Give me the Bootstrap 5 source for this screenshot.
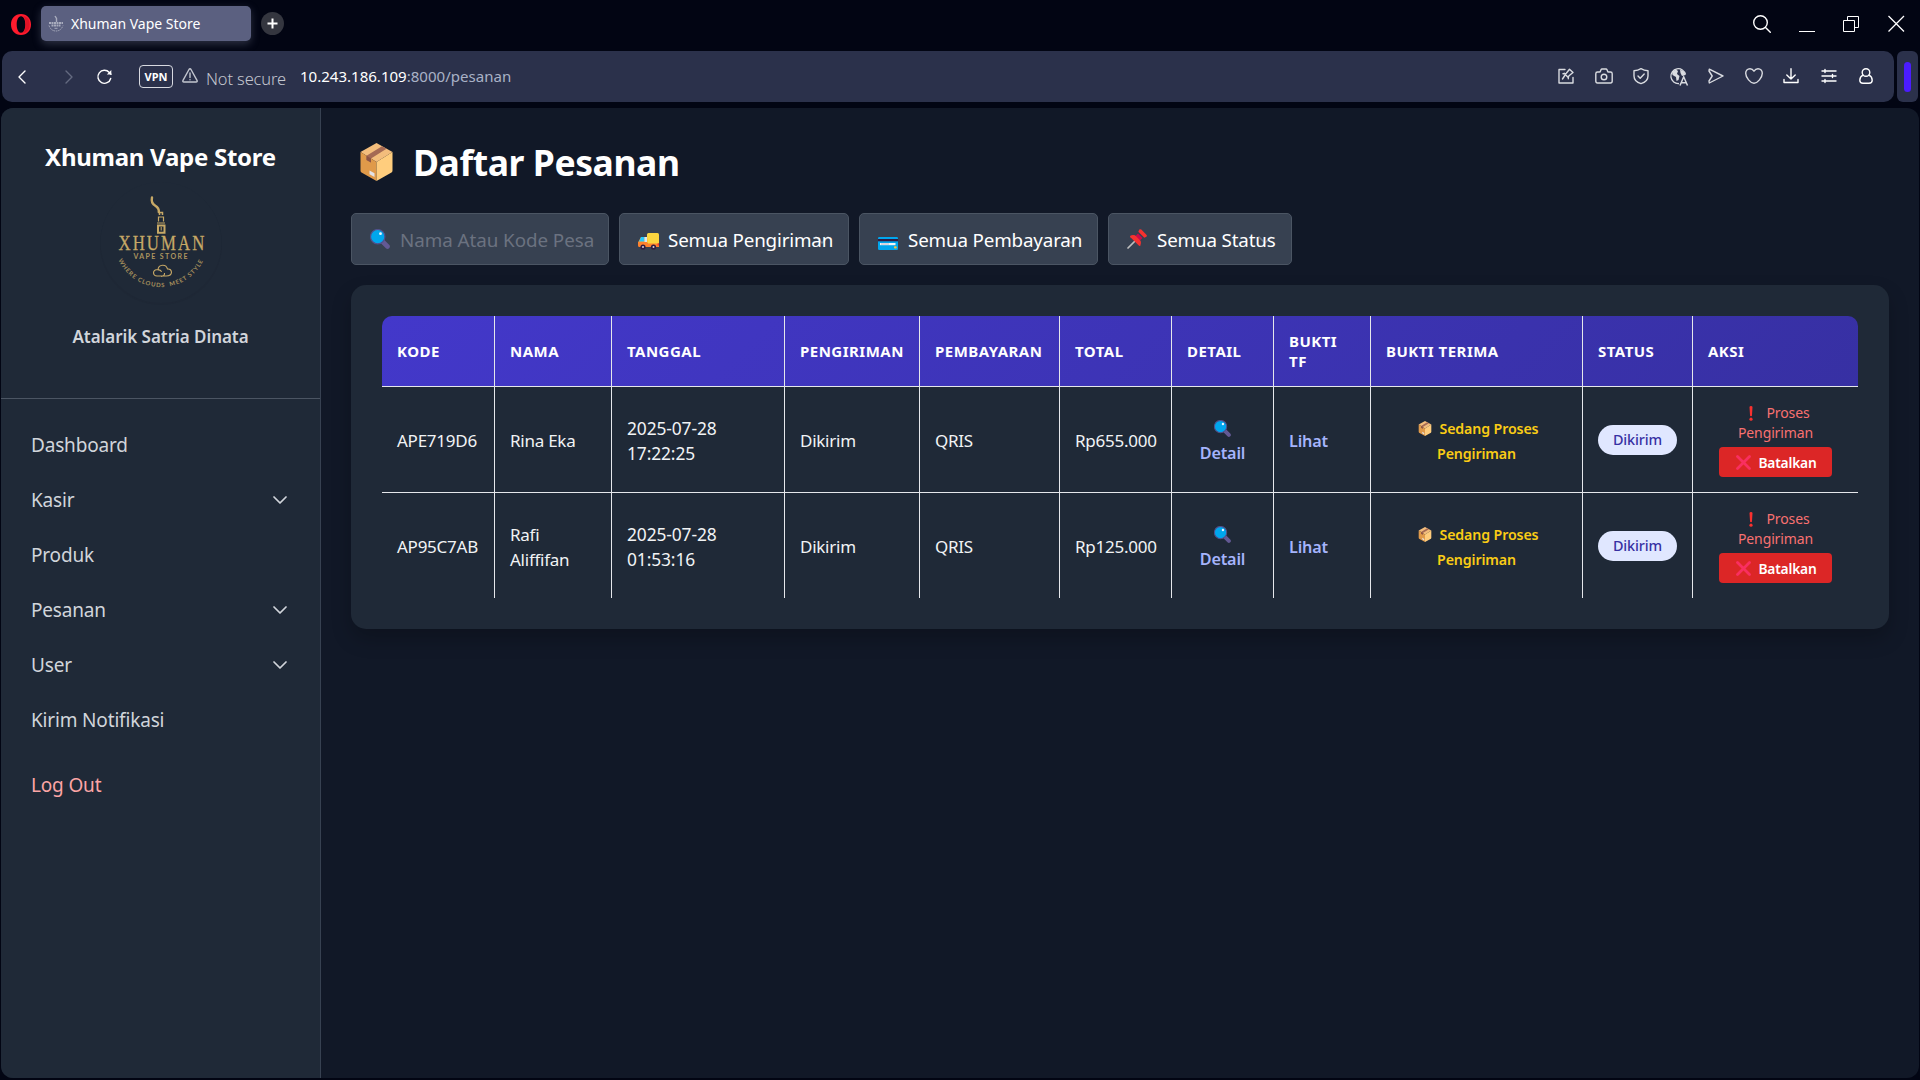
<!DOCTYPE html>
<html lang="id" data-bs-theme="dark">
<head>
<meta charset="utf-8">
<title>Xhuman Vape Store</title>
<link rel="stylesheet" href="https://cdn.jsdelivr.net/npm/bootstrap@5.3.0/dist/css/bootstrap.min.css">
<style>
  body { width: 1920px; height: 1080px; overflow: hidden; background: #020513; font-family: "Noto Sans", "Open Sans", sans-serif; color: #e5e7eb; }
  svg { flex: none; display: block; overflow: visible; }
  .ln { fill: none; stroke: currentColor; stroke-linecap: round; stroke-linejoin: round; stroke-width: 1.4; }

  /* window chrome */
  .tabstrip { height: 51px; padding: 6px 15px 0 11px; }
  .opera { margin-top: 8px; }
  .tab-active { width: 210px; height: 35px; margin-left: 10px; padding-left: 7px; background: #5b6080; border-radius: 5px; box-shadow: 0 3px 8px rgba(110,115,140,.4); color: #fff; font-size: 14px; line-height: 20px; }
  .tab-active span { margin-left: -1px; }
  .tab-plus { width: 23px; height: 23px; margin-left: 10px; margin-top: 6px; background: #34363f; }
  .window-buttons { margin-top: 9px; gap: 28px; color: #fff; }
  .toolbar { height: 51px; padding: 0 2px; }
  .addressbar { width: 1892px; background: #2b314b; border-radius: 10px; }
  .back { margin-left: 16px; }
  .forward { margin-left: 39px; color: #646a80; }
  .reload { margin-left: 24px; }
  .side-grip { width: 21px; background: #2b314b; border-radius: 6px; }
  .side-grip i { width: 7px; height: 30px; border-radius: 4px; background: #4b1cff; }
  .vpn { width: 34px; height: 23px; margin-left: 27px; padding-top: 1px; border: 1.5px solid #d7d9e0; border-radius: 4px; color: #fff; font-size: 11px; font-weight: 700; }
  .warn { margin: 0 0 2px 9px; color: #c3c6cf; }
  .notsecure { margin-left: 8px; font-size: 16.4px; font-weight: 300; color: #c3c6cf; letter-spacing: -.1px; padding-top: 5px; }
  .address { margin-left: 14px; font-size: 15.05px; color: #a9b1c6; }
  .tools { margin-right: 9px; }
  .tool { width: 37.5px; color: #d9dbe0; }

  /* page */
  .page { height: 970px; margin: 6px 1px 0; background: #111827; border-radius: 12px; overflow: hidden; }
  .sidebar { width: 320px; background: #1f2937; border-right: 1px solid #374151; }
  .brand { height: 291px; border-bottom: 1px solid #4b5563; padding-top: 34px; }
  .brand-name { font-size: 24px; font-weight: 700; line-height: 30px; color: #fff; letter-spacing: -.27px; }
  .brand-logo { margin-top: 10px; }
  .brand-user { font-size: 17px; font-weight: 600; line-height: 24px; color: #d1d5db; margin-top: 21px; letter-spacing: -.05px; }
  .menu { padding: 19px 33px 0 30px; font-size: 19px; letter-spacing: -.17px; color: #d1d5db; }
  .menu-item { height: 55px; }
  .menu-item svg { margin-top: -2px; }
  .menu-item.logout { margin-top: 10px; color: #fca5a5; }

  .content { padding: 31px 30px 0 30px; }
  .page-title { font-size: 35.5px; font-weight: 700; line-height: 46px; color: #fff; letter-spacing: -.42px; padding-left: 9px; gap: 20px; }
  .filters { gap: 10px; margin-top: 28px; }
  .filter { height: 52px; background: #374151; border: 1px solid #4b5563; border-radius: 5px; font-size: 18.8px; letter-spacing: -.16px; color: #fff; padding-left: 18px; white-space: nowrap; }
  .filter .caret { position: absolute; right: 19px; top: 22px; color: #6b7280; }
  .filter span { position: relative; margin-left: 1px; padding-top: 2px; }
  .filter.search { width: 258px; color: #6b7280; }
  .filter.search span { margin-left: 2px; letter-spacing: -.05px; }
  .filter.by-shipping { width: 230px; }
  .filter.by-payment { width: 239px; }
  .filter.by-state { width: 184px; }
  .by-payment span, .by-state span { margin-left: 2px; }
  .orders { margin-top: 20px; height: 344px; background: #1f2937; border-radius: 15px; padding: 31px; box-shadow: 0 10px 20px rgba(0,0,0,.22); }
  .rounded-head { border-radius: 10px 10px 0 0; overflow: hidden; }

  .orders-table { width: 1476px; table-layout: fixed; border-collapse: separate; border-spacing: 0; }
  .c-kode { width: 113px; } .c-nama { width: 117px; } .c-tanggal { width: 173px; } .c-kirim { width: 135px; }
  .c-bayar { width: 140px; } .c-total { width: 112px; } .c-detail { width: 102px; } .c-tf { width: 97px; }
  .c-terima { width: 212px; } .c-status { width: 110px; } .c-aksi { width: 165px; }
  .orders-table thead { background: linear-gradient(135deg, #4338ca, #3730a3); }
  .orders-table thead tr { height: 71px; }
  .orders-table th { font-size: 15px; font-weight: 700; line-height: 20px; letter-spacing: .48px; color: #fff; padding: 0 5px 0 15px; vertical-align: middle; }
  .orders-table td { font-size: 17px; line-height: 25px; letter-spacing: -.25px; padding: 2px 10px 0 15px; vertical-align: middle; color: #f1f3f5; }
  .orders-table td.when { font-size: 17.4px; letter-spacing: -.12px; }
  .orders-table td.mid { padding-left: 0; padding-right: 0; }
  .orders-table td.act { padding: 1px 0 0; }
  .orders-table th, .orders-table td { border-right: 1px solid #e5e7eb; border-bottom: 1px solid #e5e7eb; }
  .orders-table th:last-child, .orders-table td:last-child { border-right: 0; }
  .orders-table tbody tr:last-child td { border-bottom: 0; }
  .orders-table tbody tr { height: 106px; }
  .orders-table tbody tr:last-child { height: 105px; }
  .lnk { color: #a5b4fc; font-weight: 600; font-size: 16.2px; letter-spacing: -.2px; }
  .lnk svg { margin: 5px 0 4px; }
  .shipping { font-size: 14.2px; font-weight: 600; color: #facc15; letter-spacing: -.12px; padding-top: 1px; }
  .shipping svg { display: inline-block; vertical-align: middle; margin: -3px 8px 0 3px; }
  .state { width: 79px; height: 30px; margin-top: -2px; border-radius: 15px; background: #e0e7ff; color: #3730a3; font-size: 14.4px; font-weight: 500; letter-spacing: -.1px; }
  .note { font-size: 14px; line-height: 20px; color: #f87171; letter-spacing: -.12px; }
  .note svg { display: inline-block; vertical-align: middle; margin: -2px 13px 0 8px; }
  .cancel { width: 113px; height: 30px; margin-top: 4px; padding: 1px 0 0 2px; background: #dc2626; border-radius: 4px; color: #fff; font-size: 13.8px; font-weight: 600; letter-spacing: -.2px; line-height: 20px; gap: 7px; }
</style>
<script src="https://cdn.jsdelivr.net/npm/bootstrap@5.3.0/dist/js/bootstrap.bundle.min.js"></script>
</head>
<body>
<svg width="0" height="0" class="position-absolute">
  <symbol id="box" viewBox="0 0 32 38">
    <path d="M16 0 32 9 16 19 0 9Z" fill="#f3bd7c"/>
    <path d="M0 9 16 19V38L1 29.500Q0 29 0 27.500Z" fill="#e09a4a"/>
    <path d="M32 9 16 19V38L31 29.500Q32 29 32 27.500Z" fill="#ffcd7d"/>
    <path d="M21.500 3.200 26 5.800 10.500 15.400V19.500L6 17V12.700Z" fill="#a56a54"/>
    <path d="M6 12.700 10.500 15.400V19.500L6 17Z" fill="#8c5445"/>
    <path d="M9 27.500 14 30.200V34L9 31.200Z" fill="#e3e3e8"/>
  </symbol>
  <symbol id="lens" viewBox="0 0 20 20">
    <path d="M12.500 12.500 17.500 17.500" stroke="#635994" stroke-width="4.600" stroke-linecap="round"/>
    <circle cx="7.700" cy="7.700" r="7.200" fill="#00a6ed" stroke="#50508c" stroke-width="1.200"/>
    <circle cx="10.500" cy="4.700" r="1.400" fill="#e8f6ff"/>
  </symbol>
  <symbol id="truck" viewBox="0 0 21 17">
    <rect x="9" y="0" width="12" height="11" rx="1.500" fill="#fcd53f"/>
    <path d="M3 4H8Q9.300 4 9.300 5.500V12H0V9.500Z" fill="#ff9b2e"/>
    <path d="M3 4H6.500V8.500H1Z" fill="#26c9fc"/><path d="M6.500 4H9V10H6.500Z" fill="#d7e6ee"/>
    <path d="M0 9.500Q0 9 .8 9H9.300V10.500H21V14H1.500Q0 14 0 12.500Z" fill="#ff822d"/>
    <circle cx="5" cy="14" r="2.600" fill="#321b41"/><circle cx="15.500" cy="14" r="2.600" fill="#321b41"/>
    <circle cx="5" cy="14" r="1" fill="#d3d3d3"/><circle cx="15.500" cy="14" r="1" fill="#d3d3d3"/>
    <rect x="19.500" y="10.500" width="1.500" height="2" fill="#f8312f"/>
  </symbol>
  <symbol id="bankcard" viewBox="0 0 20 13">
    <rect width="20" height="13" rx="1.200" fill="#00a6ed"/>
    <rect y="2" width="20" height="2.300" fill="#321b41"/>
    <rect x="2" y="6" width="15.500" height="2.200" fill="#f4f4f4"/><rect x="3" y="6.400" width="8" height="1.200" fill="#c5bfd0"/>
    <rect x="16" y="9.200" width="2.700" height="2.400" rx=".8" fill="#f9c23c"/>
  </symbol>
  <symbol id="pin" viewBox="0 0 20 20">
    <path d="M1 19 8 12" stroke="#bebebe" stroke-width="1.700" stroke-linecap="round"/>
    <path d="M11 4.500 15.500 9 11.500 13 7 8.500Z" fill="#ca0b4a"/>
    <path d="M12.300.6Q13.300-.3 14.300.6L19.400 5.700Q20.300 6.700 19.400 7.700L17.300 8.700 11.300 2.700Z" fill="#f8312f"/>
    <path d="M3.300 6.700Q5.500 5.500 8 6.300L13.700 12Q14.500 14.500 13.300 16.700 12.500 17.300 11.800 16.600L3.400 8.200Q2.700 7.400 3.300 6.700Z" fill="#f8312f"/>
  </symbol>
  <symbol id="bang" viewBox="0 0 4 15">
    <path d="M.5 1Q.6 0 2 0T3.500 1L3 9.500Q2.900 10.300 2 10.300T1 9.500Z" fill="#f8312f"/><circle cx="2" cy="13.200" r="1.600" fill="#f8312f"/>
  </symbol>
  <symbol id="cross" viewBox="0 0 15 15">
    <path d="M1.500 1.500 13.500 13.500M13.500 1.500 1.500 13.500" stroke="#f92f60" stroke-width="2.800" stroke-linecap="round"/>
  </symbol>
  <symbol id="down" viewBox="0 0 14 8"><path d="M1 1 7 7 13 1" fill="none" stroke="currentColor" stroke-width="1.700" stroke-linecap="round" stroke-linejoin="round"/></symbol>
</svg>

<header>
  <div class="tabstrip d-flex align-items-start">
    <svg class="opera" width="20" height="21" viewBox="0 0 20 21"><path fill="#ff1b2d" fill-rule="evenodd" d="M10 0C4 0 0 4.600 0 10.500S4 21 10 21 20 16.400 20 10.500 16 0 10 0ZM10 2.200C12.800 2.200 14.300 6 14.300 10.500S12.800 18.800 10 18.800 5.700 15 5.700 10.500 7.200 2.200 10 2.200Z"/><path d="M12 1.800A9 9 0 0 1 12 19.200C15.500 17 15.500 4 12 1.800Z" fill="#e01226"/></svg>
    <div class="tab-active d-flex align-items-center">
      <svg width="16" height="17" viewBox="0 0 16 17" class="me-2" fill="none" stroke="#a9acbd"><path d="M7 1 8.500 3.500V7" stroke-width="1.400"/><path d="M1 8H15M3.500 10.500H12.500" stroke-width="1.800" stroke-dasharray="2 .5"/><path d="M1 10.500Q3 16 8 16T15 10.500" stroke-dasharray="1.500 .8"/><path d="M6.500 13.300H9.500"/></svg>
      <span>Xhuman Vape Store</span>
    </div>
    <div class="tab-plus rounded-circle d-flex align-items-center justify-content-center"><svg width="11" height="11" viewBox="0 0 11 11"><path d="M5.500.5V10.500M.5 5.500H10.500" stroke="#fff" stroke-width="2"/></svg></div>
    <div class="window-buttons ms-auto d-flex align-items-center">
      <svg class="ln" width="18" height="18" viewBox="0 0 18 18"><circle cx="7.500" cy="7.500" r="6.800"/><path d="M12.500 12.500 17.300 17.300"/></svg>
      <svg width="16" height="18" viewBox="0 0 16 18"><path d="M0 16.500H16" stroke="#fff"/></svg>
      <svg width="17" height="18" viewBox="0 0 17 18" fill="none" stroke="#fff"><path d="M.5 5.500H11.500V16.500H.5ZM4.500 5.500V1.500H15.500V12.500H11.500"/></svg>
      <svg width="17" height="18" viewBox="0 0 17 18" stroke="#fff" stroke-width="1.300"><path d="M.5 1 16 16.500M16 1 .5 16.500"/></svg>
    </div>
  </div>

  <div class="toolbar d-flex">
    <div class="addressbar d-flex align-items-center">
      <svg class="ln text-white back" width="8" height="14" viewBox="0 0 8 14"><path d="M7 1 1 7 7 13"/></svg>
      <svg class="ln forward" width="8" height="14" viewBox="0 0 8 14"><path d="M1 1 7 7 1 13"/></svg>
      <svg class="ln text-white reload" width="15" height="16" viewBox="0 0 15 16"><path d="M13.700 9.500A6.500 6.500 0 1 1 12.300 3.500L14 5.200"/><path d="M14.300 1V5.500H9.800Z" fill="#fff" stroke="none"/></svg>
      <div class="vpn d-flex align-items-center justify-content-center">VPN</div>
      <svg class="ln warn" width="16" height="15" viewBox="0 0 16 15"><path d="M7 1.500Q8 0 9 1.500L15 12.300Q15.700 14 14 14H2Q.3 14 1 12.300ZM8 5V9.500M8 11.600V11.800"/></svg>
      <span class="notsecure">Not secure</span>
      <span class="address"><span class="text-white">10.243.186.109</span>:8000/pesanan</span>
      <div class="tools ms-auto d-flex">
        <div class="tool d-flex justify-content-center"><svg class="ln" width="16" height="16" viewBox="0 0 16 16"><path d="M7 1.500H1V15H15V9.500M6.200 5.300 10.200 9.600M6.800 7.500 4.500 11M5 5.800Q8 5.500 8.300 5.200L11.500 1.200 15 4.500 11 7.800Q10.300 8.500 10.300 10.800"/></svg></div>
        <div class="tool d-flex justify-content-center"><svg class="ln" width="18" height="16" viewBox="0 0 18 16"><path d="M2.500 4H4.500Q5.300 4 5.500 3L6 1.700Q6.300 1 7 1H11Q11.700 1 12 1.700L12.500 3Q12.700 4 13.500 4H15.500Q17.200 4 17.200 5.700V13Q17.200 15 15.500 15H2.500Q.8 15 .8 13V5.700Q.8 4 2.500 4Z"/><circle cx="9" cy="9" r="2.800"/></svg></div>
        <div class="tool d-flex justify-content-center"><svg class="ln" width="16" height="16" viewBox="0 0 16 16"><path d="M8 .7Q11 2.700 15 2.700V8Q15 13.500 8 15.600 1 13.500 1 8V2.700Q5 2.700 8 .7ZM5 8 7.200 10.200 11.200 6"/></svg></div>
        <div class="tool d-flex justify-content-center"><svg width="18" height="18" viewBox="0 0 18 18" fill="none" stroke="currentColor" stroke-width="1.300"><path d="M9 15.500A7.400 7.400 0 1 1 15.500 6.500"/><path d="M2 3.500 6 1.500 8 3 7 6 9.500 8 8.500 12 6.500 13 6 9 2.500 7ZM10 1.500 14 3.500 15.500 7 12 8 10.500 5Z" fill="currentColor" stroke="none"/><path d="M10 17.500 13.700 8.800 17.500 17.500M11.300 14.700H16.200" stroke-width="1.500"/></svg></div>
        <div class="tool d-flex justify-content-center"><svg class="ln" width="16" height="16" viewBox="0 0 16 16"><path d="M1.300 1.200 15 8 1.300 15 1 13 4.200 8 1 3Z"/></svg></div>
        <div class="tool d-flex justify-content-center"><svg class="ln" width="18" height="16" viewBox="0 0 18 16"><path d="M9 3.200C10.200 1.300 11.500.7 13 .7 15.500.7 17.300 2.700 17.300 5.300 17.300 9.500 12.500 15.300 9 15.300S.7 9.500.7 5.300C.7 2.700 2.500.7 5 .7 6.500.7 7.800 1.300 9 3.200Z"/></svg></div>
        <div class="tool d-flex justify-content-center text-white"><svg class="ln" width="16" height="16" viewBox="0 0 16 16"><path d="M8 .8V11M3.800 7 8 11 12.200 7M1 11.500V14.500H15V11.500"/></svg></div>
        <div class="tool d-flex justify-content-center text-white"><svg class="ln" width="16" height="16" viewBox="0 0 16 16"><path d="M1 3H15M1 8H15M1 13H15M4 1.500V4.500M11.500 6.500V9.500M4 11.500V14.500"/></svg></div>
        <div class="tool d-flex justify-content-center text-white"><svg class="ln" width="14" height="16" viewBox="0 0 14 16"><circle cx="7" cy="4.500" r="3.800"/><path d="M4 7.200C1.500 8.500.8 10.500.8 12.300.8 14.500 2.500 15.300 4 15.300H10C11.500 15.300 13.200 14.500 13.200 12.300 13.200 10.500 12.500 8.500 10 7.200"/></svg></div>
      </div>
    </div>
    <div class="side-grip ms-auto d-flex align-items-center justify-content-center"><i></i></div>
  </div>
</header>

<div class="page d-flex">
  <aside class="sidebar flex-shrink-0">
    <div class="brand d-flex flex-column align-items-center">
      <div class="brand-name">Xhuman Vape Store</div>
      <svg class="brand-logo" width="122" height="122" viewBox="100 182 122 122">
        <circle cx="161" cy="244" r="61" fill="#1c2532" opacity=".45"/><circle cx="161" cy="242.500" r="60.500" fill="#1f2937"/>
        <g fill="none" stroke="#c6a866">
          <path d="M152 197.500Q150.800 203 155 205.500T158.800 212" stroke-width="2.400" stroke-linecap="round"/>
          <path d="M159.500 215V212.500H162.500V215" stroke-width="1.500"/>
          <path d="M158.500 221.500V217H163.500V221.500M157 223H165" stroke-width="1.200"/>
          <path d="M158 225.500H164.500V232.800H158Z" stroke-width="2"/><path d="M161.200 227V230.500" stroke-width="1"/>
          <path d="M157 276H166Q171.500 276 171.500 272 171 268.500 167.500 269 166.500 265 162.500 265.200 158.500 265.500 158 269.500 153.500 269.500 153.500 273 153.800 276 157 276M158 270Q161 269.500 161.500 272M161 276.500Q165 276 164.500 273" stroke-width="1.100"/>
        </g>
        <g fill="#c6a866">
          <text transform="translate(118.500 250) scale(.78 1)" font-family="Liberation Serif, serif" font-size="21.500" textLength="110" stroke="#c6a866" stroke-width=".3">XHUMAN</text>
          <text x="133.500" y="259.300" font-family="Lato, sans-serif" font-weight="700" font-size="7" textLength="54" opacity=".85">VAPE STORE</text>
          <path id="arc" d="M118 259A46.900 46.900 0 0 0 204 259" fill="none"/>
          <text font-family="Lato, sans-serif" font-size="6" font-weight="700" opacity=".8"><textPath href="#arc" startOffset="1" textLength="105">WHERE CLOUDS&#160; MEET STYLE</textPath></text>
        </g>
      </svg>
      <div class="brand-user">Atalarik Satria Dinata</div>
    </div>
    <nav class="menu">
      <div class="menu-item d-flex align-items-center justify-content-between">Dashboard</div>
      <div class="menu-item d-flex align-items-center justify-content-between">Kasir<svg width="14" height="8"><use href="#down"/></svg></div>
      <div class="menu-item d-flex align-items-center justify-content-between">Produk</div>
      <div class="menu-item d-flex align-items-center justify-content-between">Pesanan<svg width="14" height="8"><use href="#down"/></svg></div>
      <div class="menu-item d-flex align-items-center justify-content-between">User<svg width="14" height="8"><use href="#down"/></svg></div>
      <div class="menu-item d-flex align-items-center justify-content-between">Kirim Notifikasi</div>
      <div class="menu-item logout d-flex align-items-center">Log Out</div>
    </nav>
  </aside>

  <main class="content flex-grow-1">
    <h1 class="page-title d-flex align-items-center m-0"><svg width="33" height="38"><use href="#box"/></svg>Daftar Pesanan</h1>
    <div class="filters d-flex">
      <div class="filter search d-flex align-items-center"><svg width="20" height="20" class="me-2"><use href="#lens"/></svg><span>Nama Atau Kode Pesa</span></div>
      <div class="filter by-shipping position-relative d-flex align-items-center"><svg class="caret" width="14" height="8"><use href="#down"/></svg><svg width="21" height="17" class="me-2 mt-1"><use href="#truck"/></svg><span>Semua Pengiriman</span></div>
      <div class="filter by-payment position-relative d-flex align-items-center"><svg class="caret" width="14" height="8"><use href="#down"/></svg><svg width="20" height="13" class="me-2 mt-2"><use href="#bankcard"/></svg><span>Semua Pembayaran</span></div>
      <div class="filter by-state position-relative d-flex align-items-center"><svg class="caret" width="14" height="8"><use href="#down"/></svg><svg width="20" height="20" class="me-2"><use href="#pin"/></svg><span>Semua Status</span></div>
    </div>

    <section class="orders">
      <div class="rounded-head">
      <table class="orders-table">
        <colgroup><col class="c-kode"><col class="c-nama"><col class="c-tanggal"><col class="c-kirim"><col class="c-bayar"><col class="c-total"><col class="c-detail"><col class="c-tf"><col class="c-terima"><col class="c-status"><col class="c-aksi"></colgroup>
        <thead><tr><th>KODE</th><th>NAMA</th><th>TANGGAL</th><th>PENGIRIMAN</th><th>PEMBAYARAN</th><th>TOTAL</th><th>DETAIL</th><th>BUKTI<br>TF</th><th>BUKTI TERIMA</th><th>STATUS</th><th>AKSI</th></tr></thead>
        <tbody>
          <tr>
            <td>APE719D6</td><td>Rina Eka</td><td class="when">2025-07-28<br>17:22:25</td><td>Dikirim</td><td>QRIS</td><td>Rp655.000</td>
            <td class="mid"><div class="lnk d-flex flex-column align-items-center"><svg width="17" height="17"><use href="#lens"/></svg>Detail</div></td>
            <td><span class="lnk">Lihat</span></td>
            <td class="mid"><div class="shipping text-center"><svg width="14" height="15"><use href="#box"/></svg>Sedang Proses<br>Pengiriman</div></td>
            <td><div class="state d-flex align-items-center justify-content-center">Dikirim</div></td>
            <td class="act"><div class="d-flex flex-column align-items-center"><div class="note text-center"><svg width="4" height="15"><use href="#bang"/></svg>Proses<br>Pengiriman</div><div class="cancel d-flex align-items-center justify-content-center"><svg width="15" height="15"><use href="#cross"/></svg>Batalkan</div></div></td>
          </tr>
          <tr>
            <td>AP95C7AB</td><td>Rafi<br>Aliffifan</td><td class="when">2025-07-28<br>01:53:16</td><td>Dikirim</td><td>QRIS</td><td>Rp125.000</td>
            <td class="mid"><div class="lnk d-flex flex-column align-items-center"><svg width="17" height="17"><use href="#lens"/></svg>Detail</div></td>
            <td><span class="lnk">Lihat</span></td>
            <td class="mid"><div class="shipping text-center"><svg width="14" height="15"><use href="#box"/></svg>Sedang Proses<br>Pengiriman</div></td>
            <td><div class="state d-flex align-items-center justify-content-center">Dikirim</div></td>
            <td class="act"><div class="d-flex flex-column align-items-center"><div class="note text-center"><svg width="4" height="15"><use href="#bang"/></svg>Proses<br>Pengiriman</div><div class="cancel d-flex align-items-center justify-content-center"><svg width="15" height="15"><use href="#cross"/></svg>Batalkan</div></div></td>
          </tr>
        </tbody>
      </table>
      </div>
    </section>
  </main>
</div>
</body>
</html>
